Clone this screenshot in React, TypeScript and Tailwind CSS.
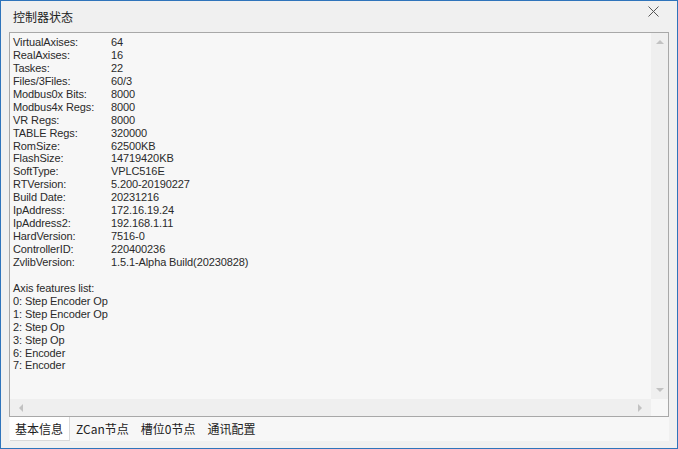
import React from "react";

const rows: [string, string][] = [
  ["VirtualAxises:", "64"],
  ["RealAxises:", "16"],
  ["Taskes:", "22"],
  ["Files/3Files:", "60/3"],
  ["Modbus0x Bits:", "8000"],
  ["Modbus4x Regs:", "8000"],
  ["VR Regs:", "8000"],
  ["TABLE Regs:", "320000"],
  ["RomSize:", "62500KB"],
  ["FlashSize:", "14719420KB"],
  ["SoftType:", "VPLC516E"],
  ["RTVersion:", "5.200-20190227"],
  ["Build Date:", "20231216"],
  ["IpAddress:", "172.16.19.24"],
  ["IpAddress2:", "192.168.1.11"],
  ["HardVersion:", "7516-0"],
  ["ControllerID:", "220400236"],
  ["ZvlibVersion:", "1.5.1-Alpha Build(20230828)"],
];

const axis = [
  "Axis features list:",
  "0: Step Encoder Op",
  "1: Step Encoder Op",
  "2: Step Op",
  "3: Step Op",
  "6: Encoder",
  "7: Encoder",
];

const Tri = ({ dir }: { dir: "up" | "down" | "left" | "right" }) => {
  const pts =
    dir === "up"
      ? "0,4 4,0 8,4"
      : dir === "down"
      ? "0,0 8,0 4,4"
      : dir === "left"
      ? "4,0 4,8 0,4"
      : "0,0 0,8 4,4";
  const w = dir === "up" || dir === "down" ? 8 : 4;
  const h = dir === "up" || dir === "down" ? 4 : 8;
  return (
    <svg width={w} height={h} viewBox={`0 0 ${w} ${h}`}>
      <polygon points={pts} fill="#c2c2c2" />
    </svg>
  );
};

export default function App() {
  const font = { fontFamily: '"Liberation Sans", "Noto Sans CJK SC", sans-serif' };
  const cjk = { fontFamily: '"Noto Sans CJK SC", sans-serif' };
  return (
    <div
      className="w-[678px] h-[449px] border border-[#2f74bb] bg-[#f0f0f0] flex flex-col text-[#2a2a2a] overflow-hidden"
      style={font}
    >
      {/* title bar */}
      <div className="h-[31px] flex items-center justify-between pl-[12px] pr-[18px]">
        <span className="text-[12px] text-[#222]" style={cjk}>
          控制器状态
        </span>
        <svg width="11" height="11" viewBox="0 0 11 11" className="mb-[10px]">
          <path d="M0.5 0.5 L10.5 10.5 M10.5 0.5 L0.5 10.5" stroke="#555" strokeWidth="1" />
        </svg>
      </div>

      {/* content box */}
      <div className="mx-[8px] h-[385px] border border-[#a8a8a8] bg-[#f7f7f7] grid grid-cols-[1fr_17px] grid-rows-[1fr_17px]">
        <div className="pl-[3px] pt-[3px] text-[11px] leading-[12.94px] overflow-hidden tracking-[-0.1px]">
          {rows.map(([k, v]) => (
            <div key={k} className="flex whitespace-nowrap">
              <span className="w-[98px]">{k}</span>
              <span>{v}</span>
            </div>
          ))}
          <div className="h-[12.94px]" />
          {axis.map((a) => (
            <div key={a} className="whitespace-nowrap">
              {a}
            </div>
          ))}
        </div>
        <div className="bg-[#efefef] flex flex-col items-center justify-between py-[7px]">
          <Tri dir="up" />
          <Tri dir="down" />
        </div>
        <div className="bg-[#efefef] flex items-center justify-between px-[9px]">
          <Tri dir="left" />
          <Tri dir="right" />
        </div>
        <div className="bg-[#f7f7f7]" />
      </div>

      {/* tabs */}
      <div className="mx-[8px] h-[24px] bg-[#f7f7f7] flex items-stretch text-[12px] text-[#222]" style={cjk}>
        <div className="bg-white border-r border-b border-[#d9d9d9] pl-[5px] pr-[6px] flex items-center ml-[1px]">
          基本信息
        </div>
        <div className="pl-[6px] pr-[6px] flex items-center">ZCan节点</div>
        <div className="pl-[6px] pr-[6px] flex items-center">槽位0节点</div>
        <div className="pl-[6px] pr-[6px] flex items-center">通讯配置</div>
      </div>
    </div>
  );
}
